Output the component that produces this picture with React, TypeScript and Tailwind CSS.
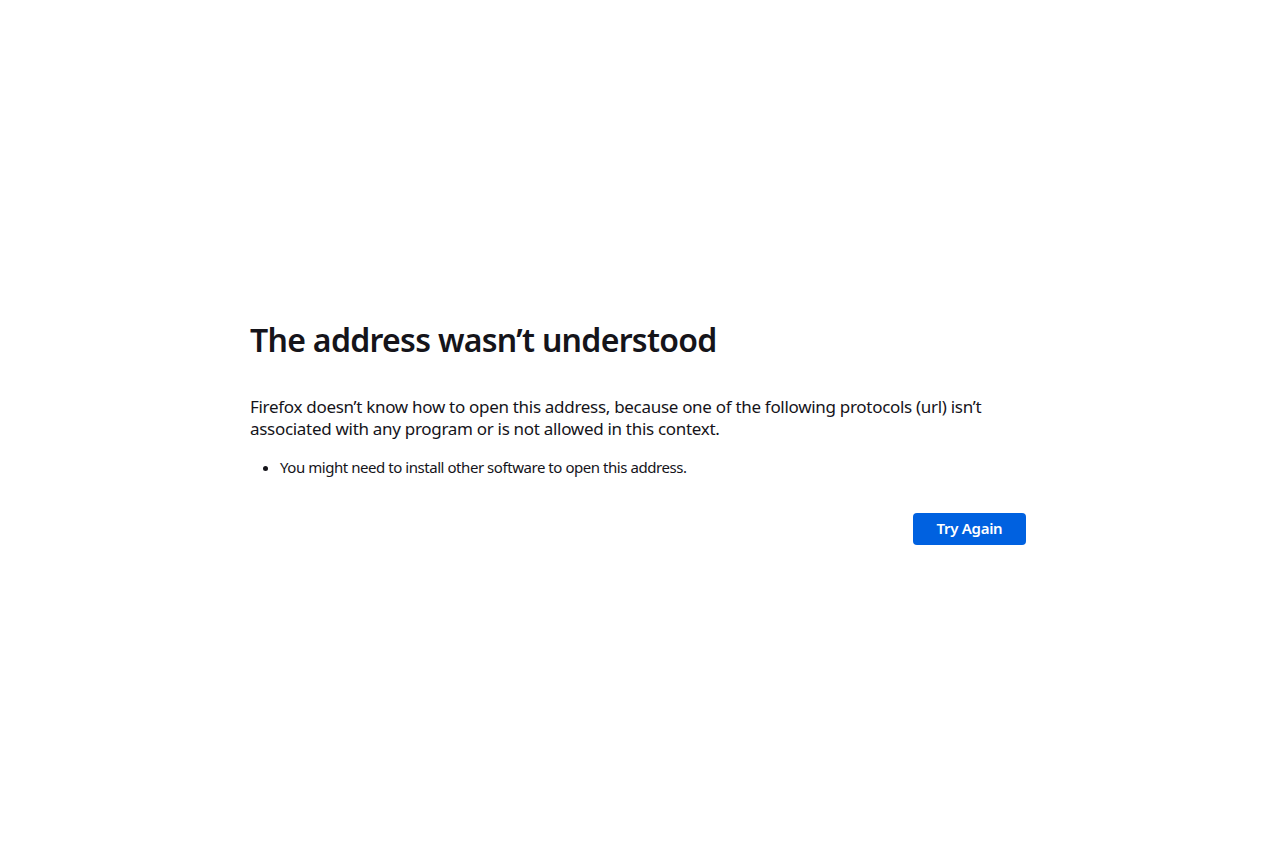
export default function App() {
  return (
    <div className="min-h-[843px] bg-white font-['Noto_Sans',sans-serif] text-[#15141a]">
      <div className="mx-auto w-[780px] pr-[4px] pt-[318px]">
        <h1 className="text-[32px] leading-[44px] font-semibold tracking-[-0.7px]">
          The address wasn’t understood
        </h1>
        <p className="mt-[34px] text-[17px] leading-[22px] tracking-[-0.3px]">
          Firefox doesn’t know how to open this address, because one of the following protocols (url) isn’t
          associated with any program or is not allowed in this context.
        </p>
        <ul className="mt-[17px] list-disc pl-[30px] text-[15px] leading-[20px] tracking-[-0.45px]">
          <li>You might need to install other software to open this address.</li>
        </ul>
        <div className="mt-[36px] flex justify-end">
          <button className="h-[32px] w-[113px] rounded-[4px] bg-[#0061e0] pb-[1px] text-[15px] font-semibold tracking-[-0.3px] text-white">
            Try Again
          </button>
        </div>
      </div>
    </div>
  )
}
